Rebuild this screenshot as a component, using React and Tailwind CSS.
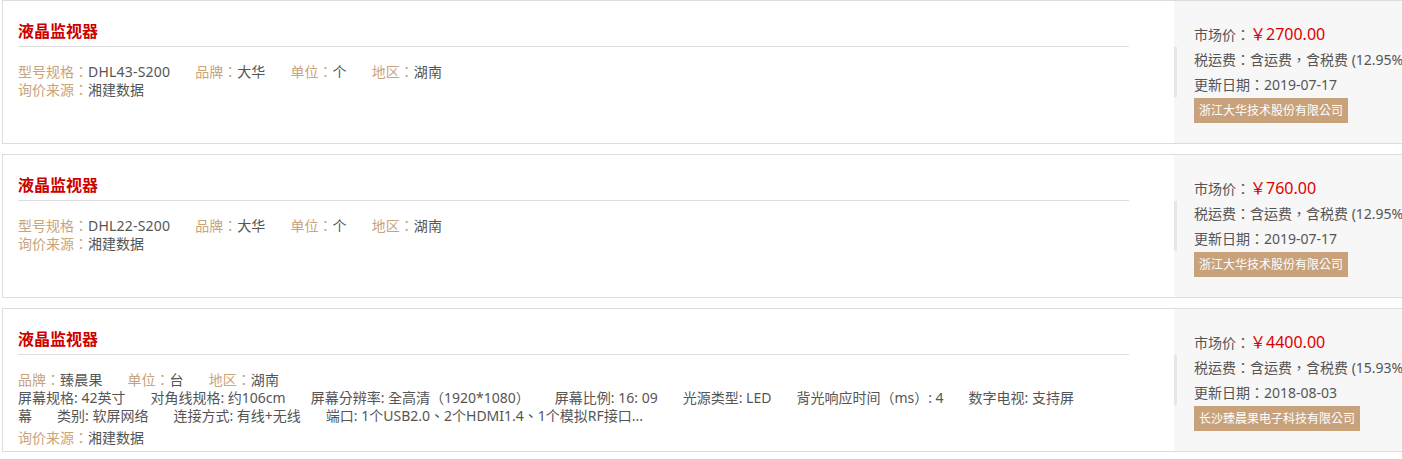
const items = [
  {
    title: '液晶监视器',
    fields: [
      ['型号规格', 'DHL43-S200'],
      ['品牌', '大华'],
      ['单位', '个'],
      ['地区', '湖南'],
    ],
    specs: null,
    source: '湘建数据',
    price: '2700.00',
    tax: '含运费，含税费 (12.95%)',
    date: '2019-07-17',
    company: '浙江大华技术股份有限公司',
  },
  {
    title: '液晶监视器',
    fields: [
      ['型号规格', 'DHL22-S200'],
      ['品牌', '大华'],
      ['单位', '个'],
      ['地区', '湖南'],
    ],
    specs: null,
    source: '湘建数据',
    price: '760.00',
    tax: '含运费，含税费 (12.95%)',
    date: '2019-07-17',
    company: '浙江大华技术股份有限公司',
  },
  {
    title: '液晶监视器',
    fields: [
      ['品牌', '臻晨果'],
      ['单位', '台'],
      ['地区', '湖南'],
    ],
    specs: [
      '屏幕规格: 42英寸',
      '对角线规格: 约106cm',
      '屏幕分辨率: 全高清（1920*1080）',
      '屏幕比例: 16: 09',
      '光源类型: LED',
      '背光响应时间（ms）: 4',
      '数字电视: 支持屏幕',
      '类别: 软屏网络',
      '连接方式: 有线+无线',
      '端口: 1个USB2.0、2个HDMI1.4、1个模拟RF接口...',
    ],
    source: '湘建数据',
    price: '4400.00',
    tax: '含运费，含税费 (15.93%)',
    date: '2018-08-03',
    company: '长沙臻晨果电子科技有限公司',
  },
]

function Field({ label, value }) {
  return (
    <span className="mr-[25px]">
      <span className="text-[#c9a37c]">{label}：</span>
      <span className="text-[#555] tracking-[0.2px]">{value}</span>
    </span>
  )
}

function ProductCard({ item }) {
  return (
    <div className="flex w-[1440px] h-[144px] border border-[#dddddd] mb-[10px]">
      {/* 左侧信息 */}
      <div className="w-[1171px] shrink-0 pl-[15px] pr-[45px] pt-[20px]">
        <div className="text-[16px] leading-[20px] font-bold text-[#cc0000] pb-[5px] border-b border-[#dddddd]">
          {item.title}
        </div>
        <div className="mt-[16px] text-[14px] leading-[18px]">
          <div className="whitespace-nowrap">
            {item.fields.map(([l, v]) => (
              <Field key={l} label={l} value={v} />
            ))}
          </div>
          {item.specs && (
            <div className="w-[1068px] text-[#555] mb-[4px]">
              {item.specs.map(s => (
                <span key={s} className="mr-[25px]">{s}</span>
              ))}
            </div>
          )}
          <div>
            <span className="text-[#c9a37c]">询价来源：</span>
            <span className="text-[#555]">{item.source}</span>
          </div>
        </div>
      </div>

      {/* 右侧价格 */}
      <div className="flex-1 bg-[#f7f7f7] pl-[20px] pt-[21px] text-[14px] leading-[25px] text-[#555] whitespace-nowrap">
        <div>
          市场价：<span className="text-[16px] text-[#dd0000]">￥{item.price}</span>
        </div>
        <div className="-ml-[20px] pl-[17px] border-l-[3px] border-[#e6e6e6]">
          <div>税运费：{item.tax}</div>
          <div>更新日期：{item.date}</div>
        </div>
        <div className="inline-block bg-[#c8a27b] text-white text-[12px] leading-[25px] px-[5px]">
          {item.company}
        </div>
      </div>
    </div>
  )
}

export default function App() {
  return (
    <div
      className="w-[1402px] h-[459px] overflow-hidden bg-white pl-[2px]"
      style={{ fontFamily: '"Noto Sans", "Noto Sans CJK TC", sans-serif' }}
    >
      {items.map((item, i) => (
        <ProductCard key={i} item={item} />
      ))}
    </div>
  )
}
